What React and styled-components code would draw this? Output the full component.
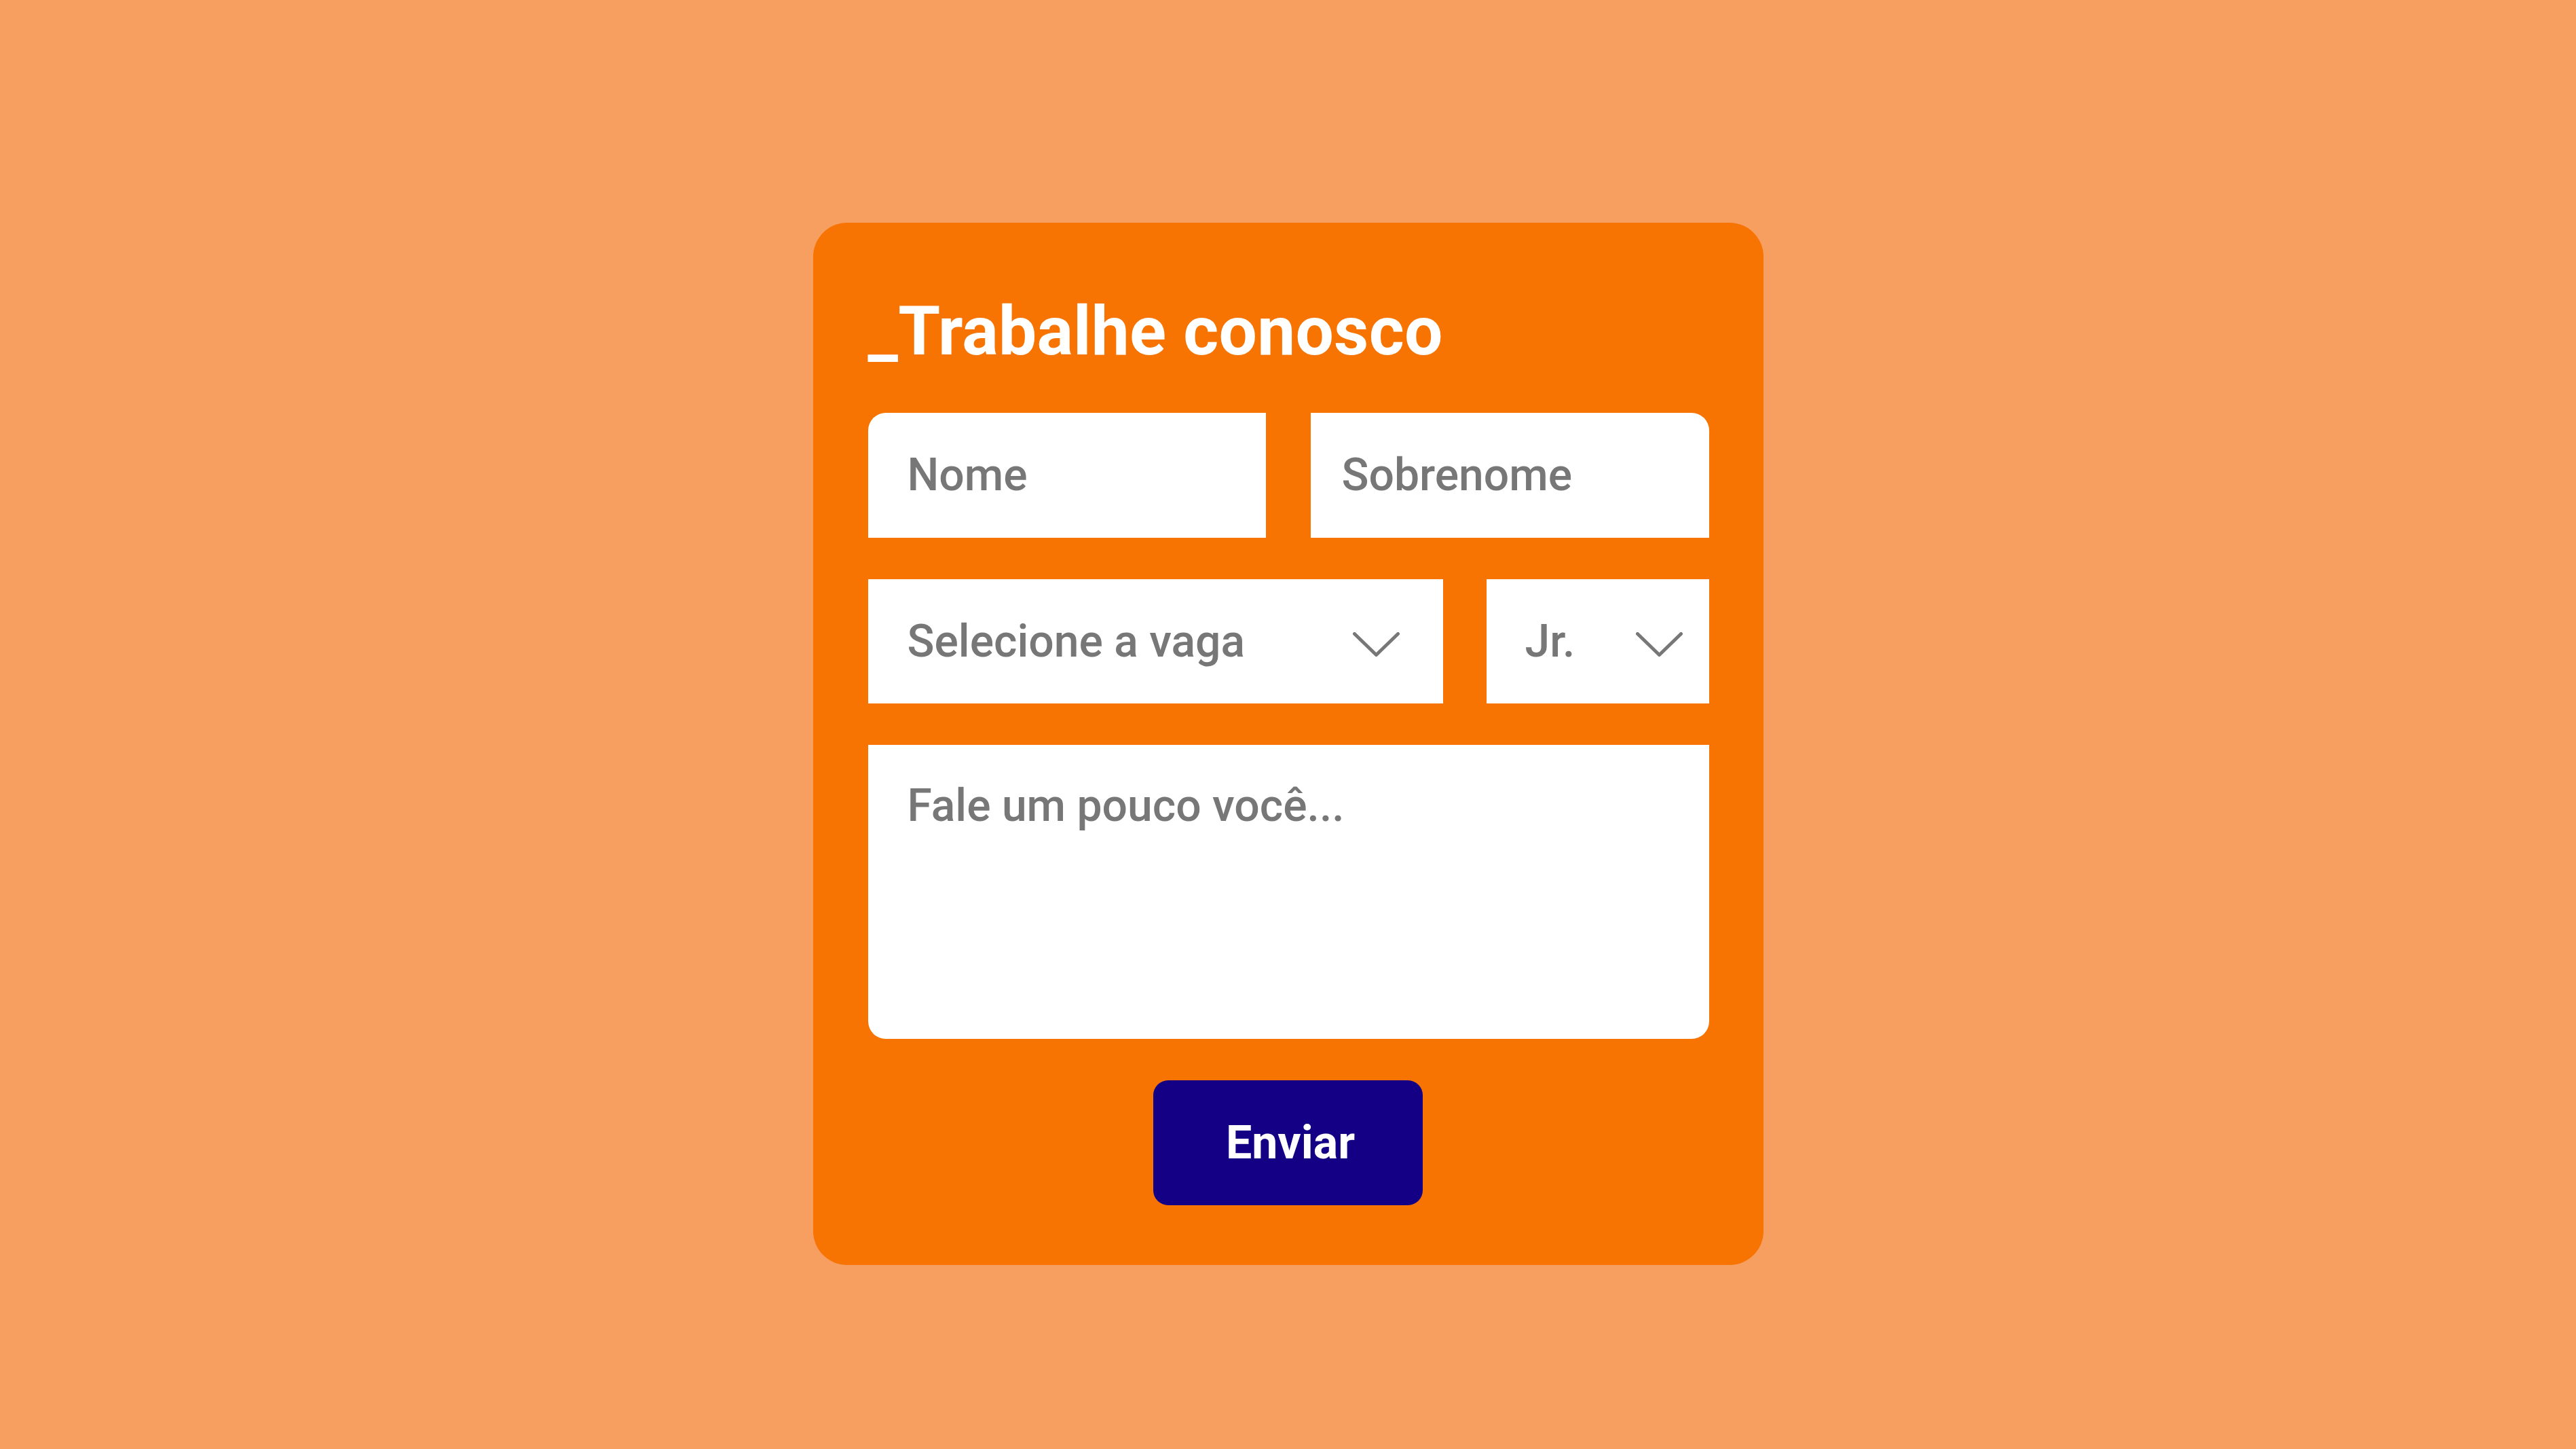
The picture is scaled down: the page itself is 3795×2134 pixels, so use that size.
import React from "react";
import styled, { createGlobalStyle } from "styled-components";

const GlobalStyle = createGlobalStyle`
  html, body {
    margin: 0;
    padding: 0;
    background: #f79e61;
  }
  body {
    font-family: Roboto, "Noto Sans", "Liberation Sans", sans-serif;
  }
`;

const Page = styled.div`
  min-height: 100vh;
  display: flex;
  justify-content: center;
  align-items: flex-start;
  padding-top: 328px;
  box-sizing: border-box;
`;

const Card = styled.form`
  width: 1400px;
  box-sizing: border-box;
  background: #f77402;
  border-radius: 50px;
  padding: 110px 80px 88px 81px;
  display: flex;
  flex-direction: column;
`;

const Title = styled.h1`
  margin: 0 0 70px 0;
  font-family: Roboto, "Liberation Sans", sans-serif;
  font-weight: 700;
  font-size: 100px;
  line-height: 100px;
  letter-spacing: 0.2px;
  color: #ffffff;
  white-space: nowrap;
`;

const Fields = styled.div`
  display: flex;
  flex-direction: column;
  gap: 61px;
`;

const Row = styled.div`
  display: grid;
  grid-template-columns: ${(p) => p.$cols};
  column-gap: ${(p) => p.$gap}px;
`;

const Field = styled.div`
  background: #ffffff;
  height: ${(p) => p.$h}px;
  box-sizing: border-box;
  display: flex;
  align-items: ${(p) => (p.$top ? "flex-start" : "center")};
  padding-left: ${(p) => p.$pl ?? 58}px;
  padding-right: ${(p) => p.$pr ?? 0}px;
  padding-top: ${(p) => p.$pt ?? 0}px;
  border-radius: ${(p) => p.$radius || "0"};
`;

const Placeholder = styled.span`
  font-family: Roboto, "Liberation Sans", sans-serif;
  font-weight: 500;
  font-size: 66px;
  line-height: 66px;
  color: #777777;
  white-space: nowrap;
`;

const Chevron = styled.svg`
  margin-left: auto;
  margin-top: 9px;
  flex: none;
`;

const Actions = styled.div`
  display: flex;
  justify-content: center;
  margin-top: 61px;
`;

const Button = styled.button`
  width: 397px;
  height: 184px;
  border: none;
  border-radius: 22px;
  background: #130085;
  color: #ffffff;
  font-family: Roboto, "Liberation Sans", sans-serif;
  font-weight: 700;
  font-size: 68px;
  line-height: 68px;
  padding: 0 0 0 8px;
  margin-left: -2px;
  cursor: pointer;
  display: flex;
  align-items: center;
  justify-content: center;
`;

const ChevronIcon = () => (
  <Chevron width="69" height="36" viewBox="0 0 69 36" aria-hidden="true">
    <polyline
      points="2.5,2.5 34.5,33.5 66.5,2.5"
      fill="none"
      stroke="#777777"
      strokeWidth="5"
      strokeLinecap="round"
      strokeLinejoin="round"
    />
  </Chevron>
);

export default function App() {
  return (
    <>
      <GlobalStyle />
      <Page>
        <Card onSubmit={(e) => e.preventDefault()}>
          <Title>_Trabalhe conosco</Title>
          <Fields>
            <Row $cols="586px 587px" $gap={66}>
              <Field $h={184} $radius="26px 0 0 0">
                <Placeholder>Nome</Placeholder>
              </Field>
              <Field $h={184} $pl={46} $radius="0 26px 0 0">
                <Placeholder>Sobrenome</Placeholder>
              </Field>
            </Row>
            <Row $cols="847px 328px" $gap={64}>
              <Field $h={183} $pr={64}>
                <Placeholder>Selecione a vaga</Placeholder>
                <ChevronIcon />
              </Field>
              <Field $h={183} $pl={57} $pr={39}>
                <Placeholder>Jr.</Placeholder>
                <ChevronIcon />
              </Field>
            </Row>
            <Field $h={433} $top $pt={57} $radius="0 0 26px 26px">
              <Placeholder>Fale um pouco você...</Placeholder>
            </Field>
          </Fields>
          <Actions>
            <Button type="submit">Enviar</Button>
          </Actions>
        </Card>
      </Page>
    </>
  );
}
